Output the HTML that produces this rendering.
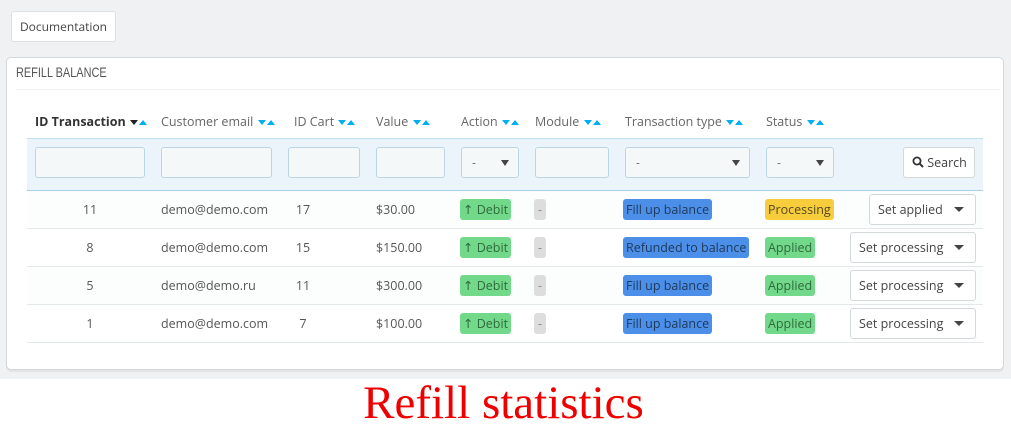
<!DOCTYPE html>
<html><head><meta charset="utf-8"><style>
*{box-sizing:border-box;margin:0;padding:0}
body{width:1011px;height:436px;background:#fff;font-family:"Open Sans","DejaVu Sans","Liberation Sans",sans-serif;font-size:12.5px;color:#555;position:relative;overflow:hidden}
.bg{position:absolute;left:0;top:0;width:1011px;height:379px;background:#eff1f2}
.abs{position:absolute}
.doc{left:11px;top:11px;width:105px;height:31px;background:#fff;border:1px solid #dde0e2;border-radius:3px;font-size:12px;color:#444;line-height:29px;text-align:center}
.panel{left:6px;top:57px;width:998px;height:313px;background:#fff;border:1px solid #d3d8db;border-radius:5px;box-shadow:0 2px 0 rgba(0,0,0,.05)}
.ptitle{left:16px;top:64px;font-family:"Liberation Sans Narrow","Liberation Sans",sans-serif;font-size:14px;color:#555;transform:scaleX(.78);transform-origin:left}
.hline{left:16px;top:89px;width:984px;height:1px;background:#eef0f1}
.th{top:113px;font-size:12.5px;color:#666;white-space:nowrap}
.th b{color:#333}
.ar{display:inline-block;width:0;height:0;border-left:4px solid transparent;border-right:4px solid transparent;vertical-align:middle;margin-left:1px}
.dn{border-top:5px solid #00aff0}.up{border-bottom:5px solid #00aff0}
.dk{border-top:5px solid #222}
.frow{left:27px;top:138px;width:956px;height:53px;background:#eaf4fa;border-top:1px solid #bfe0ef;border-bottom:1px solid #a8d2e4}
.inp{height:31px;top:147px;background:#f5f8f9;border:1px solid #bcd6e3;border-radius:3px;font-size:12px;color:#666;line-height:29px;padding-left:10px}
.sel:after{content:"";position:absolute;right:9px;top:12px;border-left:4px solid transparent;border-right:4px solid transparent;border-top:6px solid #444}
.btn{background:#fff;border:1px solid #d3d8db;border-radius:3px;color:#444;font-size:12.5px}
.row{left:27px;width:956px;height:38px;border-bottom:1px solid #e3e8ea;background:#fcfdfd}
.c{position:absolute;font-size:12.5px;color:#555;line-height:38px;white-space:nowrap}
.cc{width:30px;text-align:center}
.badge{position:absolute;height:21px;line-height:21px;border-radius:3px;font-size:12.5px;padding:0 3px;white-space:nowrap}
.g{background:#72d98a;color:#2f6a3c}.gr{background:#ddd;color:#888;width:12px;padding:0;text-align:center}
.bl{background:#4b8fe9;color:#213a5c}.yl{background:#f7cd3d;color:#554a1b}
.act{position:absolute;height:31px;background:#fff;border:1px solid #d3d8db;border-radius:3px;line-height:29px;padding-left:8px;color:#444;font-size:12.5px}
.act:after{content:"";position:absolute;right:11px;top:12px;border-left:5px solid transparent;border-right:5px solid transparent;border-top:5px solid #444}
.title{left:0;width:1007px;top:374px;text-align:center;font-family:"Liberation Serif",serif;font-size:47px;color:#ee0000;line-height:58px}
</style></head><body>
<div class="bg"></div>
<div class="abs doc">Documentation</div>
<div class="abs panel"></div>
<div class="abs ptitle">REFILL BALANCE</div>
<div class="abs hline"></div>

<div class="abs th" style="left:35px"><b>ID Transaction</b> <span class="ar dk"></span><span class="ar up"></span></div>
<div class="abs th" style="left:161px">Customer email <span class="ar dn"></span><span class="ar up"></span></div>
<div class="abs th" style="left:294px">ID Cart <span class="ar dn"></span><span class="ar up"></span></div>
<div class="abs th" style="left:376px">Value <span class="ar dn"></span><span class="ar up"></span></div>
<div class="abs th" style="left:461px">Action <span class="ar dn"></span><span class="ar up"></span></div>
<div class="abs th" style="left:535px">Module <span class="ar dn"></span><span class="ar up"></span></div>
<div class="abs th" style="left:625px">Transaction type <span class="ar dn"></span><span class="ar up"></span></div>
<div class="abs th" style="left:766px">Status <span class="ar dn"></span><span class="ar up"></span></div>

<div class="abs frow"></div>
<div class="abs inp" style="left:35px;width:110px"></div>
<div class="abs inp" style="left:161px;width:111px"></div>
<div class="abs inp" style="left:288px;width:72px"></div>
<div class="abs inp" style="left:376px;width:69px"></div>
<div class="abs inp sel" style="left:461px;width:58px">-</div>
<div class="abs inp" style="left:535px;width:74px"></div>
<div class="abs inp sel" style="left:625px;width:125px">-</div>
<div class="abs inp sel" style="left:766px;width:68px">-</div>
<div class="abs btn" style="left:903px;top:147px;width:72px;height:31px;line-height:29px;padding-left:8px"><svg width="12" height="12" viewBox="0 0 12 12" style="vertical-align:-1px"><circle cx="5" cy="5" r="3.6" fill="none" stroke="#333" stroke-width="1.8"/><path d="M7.6 7.6L11 11" stroke="#333" stroke-width="2"/></svg> Search</div>

<div class="abs row" style="top:191px"></div>
<div class="abs row" style="top:229px;background:#fff"></div>
<div class="abs row" style="top:267px"></div>
<div class="abs row" style="top:305px;background:#fff"></div>

<div class="c cc" style="left:75px;top:191px">11</div><div class="c" style="left:161px;top:191px">demo@demo.com</div><div class="c cc" style="left:288px;top:191px">17</div><div class="c" style="left:376px;top:191px">$30.00</div>
<span class="badge g" style="left:460px;top:199px">↑ Debit</span><span class="badge gr" style="left:534px;top:199px">-</span>
<span class="badge bl" style="left:623px;top:199px">Fill up balance</span><span class="badge yl" style="left:765px;top:199px">Processing</span>
<div class="act" style="left:869px;top:194px;width:107px">Set applied</div>

<div class="c cc" style="left:75px;top:229px">8</div><div class="c" style="left:161px;top:229px">demo@demo.com</div><div class="c cc" style="left:288px;top:229px">15</div><div class="c" style="left:376px;top:229px">$150.00</div>
<span class="badge g" style="left:460px;top:237px">↑ Debit</span><span class="badge gr" style="left:534px;top:237px">-</span>
<span class="badge bl" style="left:623px;top:237px">Refunded to balance</span><span class="badge g" style="left:765px;top:237px">Applied</span>
<div class="act" style="left:850px;top:232px;width:126px">Set processing</div>

<div class="c cc" style="left:75px;top:267px">5</div><div class="c" style="left:161px;top:267px">demo@demo.ru</div><div class="c cc" style="left:288px;top:267px">11</div><div class="c" style="left:376px;top:267px">$300.00</div>
<span class="badge g" style="left:460px;top:275px">↑ Debit</span><span class="badge gr" style="left:534px;top:275px">-</span>
<span class="badge bl" style="left:623px;top:275px">Fill up balance</span><span class="badge g" style="left:765px;top:275px">Applied</span>
<div class="act" style="left:850px;top:270px;width:126px">Set processing</div>

<div class="c cc" style="left:75px;top:305px">1</div><div class="c" style="left:161px;top:305px">demo@demo.com</div><div class="c cc" style="left:288px;top:305px">7</div><div class="c" style="left:376px;top:305px">$100.00</div>
<span class="badge g" style="left:460px;top:313px">↑ Debit</span><span class="badge gr" style="left:534px;top:313px">-</span>
<span class="badge bl" style="left:623px;top:313px">Fill up balance</span><span class="badge g" style="left:765px;top:313px">Applied</span>
<div class="act" style="left:850px;top:308px;width:126px">Set processing</div>

<div class="abs title">Refill statistics</div>
</body></html>
